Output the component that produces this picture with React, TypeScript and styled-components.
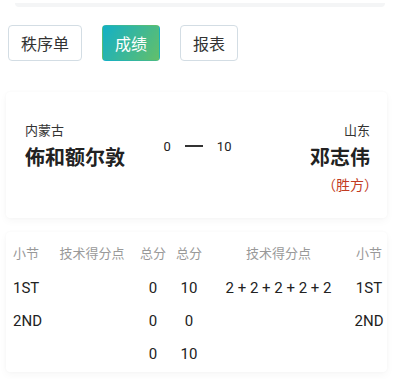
import React from "react";
import styled, { createGlobalStyle } from "styled-components";

const Global = createGlobalStyle`
  html, body { margin: 0; padding: 0; background: #ffffff; }
  body { font-family: "Noto Sans CJK SC", "Noto Sans", sans-serif; color: #333; }
  * { box-sizing: border-box; }
`;

const Page = styled.div`
  width: 405px;
  height: 379px;
  overflow: hidden;
  display: flex;
  flex-direction: column;
`;

const TopStrip = styled.div`
  height: 4px;
  margin: 3px 20px 0 15px;
  background: #f4f5f6;
  border-radius: 0 0 4px 4px;
`;

const Tabs = styled.div`
  display: flex;
  gap: 20px;
  padding: 18px 0 0 8px;
`;

const Tab = styled.div<{ $active?: boolean }>`
  height: 36px;
  padding: 0 12px;
  display: flex;
  align-items: center;
  font-size: 16px;
  border-radius: 4px;
  border: 1px solid ${(p) => (p.$active ? "transparent" : "#d3dde4")};
  color: ${(p) => (p.$active ? "#ffffff" : "#333333")};
  background: ${(p) =>
    p.$active ? "linear-gradient(120deg, #13b0c6 0%, #63bf6a 100%)" : "#ffffff"};
`;

const Card = styled.div<{ $mt: number }>`
  margin: ${(p) => p.$mt}px 18px 0 6px;
  background: #ffffff;
  border-radius: 4px;
  box-shadow: 0 3px 8px rgba(0, 0, 0, 0.035), 0 0 3px rgba(0, 0, 0, 0.03);
`;

const Match = styled.div`
  display: grid;
  grid-template-columns: 1fr auto 1fr;
  padding: 29px 17px 25px 19px;
`;

const Side = styled.div<{ $right?: boolean }>`
  display: flex;
  flex-direction: column;
  align-items: ${(p) => (p.$right ? "flex-end" : "flex-start")};
`;

const Region = styled.div`
  font-size: 13px;
  line-height: 18px;
  color: #333;
`;

const Name = styled.div`
  font-size: 20px;
  line-height: 30px;
  margin-top: 3px;
  font-weight: 700;
  color: #222;
`;

const Winner = styled.div`
  font-size: 14px;
  line-height: 18px;
  color: #c23b22;
  margin-top: 3px;
  margin-right: -8px;
`;

const Score = styled.div`
  display: flex;
  align-items: center;
  gap: 14px;
  margin-top: 17px;
  height: 16px;
  font-family: Roboto, "Noto Sans", sans-serif;
  font-size: 13px;
  color: #222;
`;

const Dash = styled.span`
  width: 18px;
  height: 2px;
  background: #333;
`;

const Table = styled.div`
  display: grid;
  grid-template-columns: 40px 78px 44px 28px 151px 30px;
  padding: 1px 0 2px 7px;
`;

const Cell = styled.div<{ $head?: boolean; $align?: string }>`
  height: ${(p) => (p.$head ? 38 : 33)}px;
  display: flex;
  align-items: center;
  justify-content: ${(p) => p.$align || "center"};
  font-size: ${(p) => (p.$head ? 13 : 15)}px;
  font-weight: 400;
  color: ${(p) => (p.$head ? "#999999" : "#222222")};
  font-family: ${(p) => (p.$head ? '"Noto Sans CJK SC", sans-serif' : 'Roboto, "Noto Sans", sans-serif')};
  white-space: nowrap;
`;

const head = ["小节", "技术得分点", "总分", "总分", "技术得分点", "小节"];
const rows = [
  ["1ST", "", "0", "10", "2 + 2 + 2 + 2 + 2", "1ST"],
  ["2ND", "", "0", "0", "", "2ND"],
  ["", "", "0", "10", "", ""],
];

export default function App() {
  return (
    <Page>
      <Global />
      <TopStrip />
      <Tabs>
        <Tab>秩序单</Tab>
        <Tab $active>成绩</Tab>
        <Tab>报表</Tab>
      </Tabs>
      <Card $mt={31}>
        <Match>
          <Side>
            <Region>内蒙古</Region>
            <Name>佈和额尔敦</Name>
          </Side>
          <Score>
            <span>0</span>
            <Dash />
            <span>10</span>
          </Score>
          <Side $right>
            <Region>山东</Region>
            <Name>邓志伟</Name>
            <Winner>（胜方）</Winner>
          </Side>
        </Match>
      </Card>
      <Card $mt={14}>
        <Table>
          {head.map((h, i) => (
            <Cell key={"h" + i} $head $align={i === 0 ? "flex-start" : "center"}>
              {h}
            </Cell>
          ))}
          {rows.map((r, ri) =>
            r.map((c, ci) => (
              <Cell key={ri + "-" + ci} $align={ci === 0 ? "flex-start" : "center"}>
                {c}
              </Cell>
            ))
          )}
        </Table>
      </Card>
    </Page>
  );
}
